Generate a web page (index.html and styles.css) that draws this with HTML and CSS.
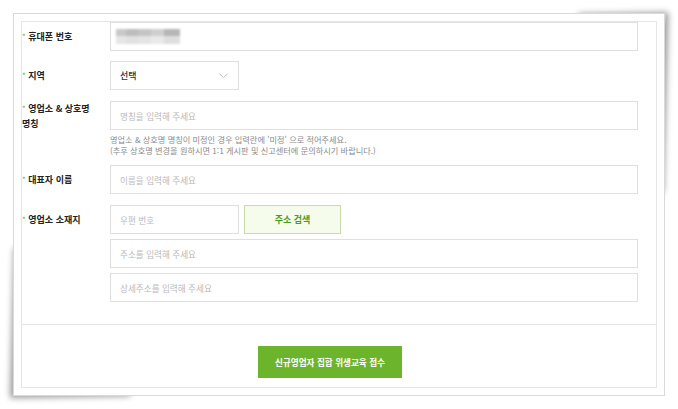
FILE: index.html
```html
<!DOCTYPE html>
<html lang="ko">
<head>
<meta charset="utf-8">
<link rel="stylesheet" href="styles.css">
</head>
<body>
<div class="stage">
  <div class="paper">
    <div class="card">
      <div class="form">
        <div class="row r1">
          <div class="label"><span class="req">*</span> 휴대폰 번호</div>
          <div class="field input wide"><span class="blur"></span></div>
        </div>
        <div class="row r2">
          <div class="label"><span class="req">*</span> 지역</div>
          <div class="field input select">
            <span class="sel-text">선택</span>
            <svg class="chev" width="9" height="6" viewBox="0 0 9 6"><path d="M0.5 0.8 L4.5 4.6 L8.5 0.8" fill="none" stroke="#b5b5b5" stroke-width="0.9"/></svg>
          </div>
        </div>
        <div class="row r3">
          <div class="label two"><span class="req">*</span> 영업소 &amp; 상호명<br>명칭</div>
          <div class="col">
            <div class="field input full"><span class="ph">명칭을 입력해 주세요</span></div>
            <p class="help">영업소 &amp; 상호명 명칭이 미정인 경우 입력란에 '미정' 으로 적어주세요.<br>(추후 상호명 변경을 원하시면 1:1 게시판 및 신고센터에 문의하시기 바랍니다.)</p>
          </div>
        </div>
        <div class="row r4">
          <div class="label"><span class="req">*</span> 대표자 이름</div>
          <div class="field input wide"><span class="ph">이름을 입력해 주세요</span></div>
        </div>
        <div class="row r5">
          <div class="label"><span class="req">*</span> 영업소 소재지</div>
          <div class="col">
            <div class="zip-line">
              <div class="field input zip"><span class="ph">우편 번호</span></div>
              <div class="search-btn">주소 검색</div>
            </div>
            <div class="field input full addr"><span class="ph">주소를 입력해 주세요</span></div>
            <div class="field input full addr"><span class="ph">상세주소를 입력해 주세요</span></div>
          </div>
        </div>
      </div>
      <div class="submit-area">
        <div class="submit-btn">신규영업자 집합 위생교육 접수</div>
      </div>
    </div>
  </div>
</div>
</body>
</html>
```

FILE: styles.css
```css
* { box-sizing: border-box; }
html, body { margin: 0; padding: 0; background: #fff; }
body {
  font-family: "Noto Sans CJK KR", "Noto Sans", sans-serif;
  color: #222;
  width: 678px;
  height: 409px;
  overflow: hidden;
}
.stage {
  position: relative;
  z-index: 0;
  padding: 13px;
}
.paper {
  position: relative;
  width: 652px;
  height: 383px;
  border: 1px solid #d9d9d9;
  background: #fff;
  padding: 7px;
}
.paper::before,
.paper::after {
  content: "";
  position: absolute;
  z-index: -1;
  background: #fff;
}
.paper::before {
  top: 1px;
  right: 1px;
  width: 90px;
  height: 180px;
  box-shadow: 3px -2px 6px rgba(0,0,0,0.4);
  transform: skew(-1.5deg, -1deg);
}
.paper::after {
  bottom: 1px;
  left: 1px;
  width: 120px;
  height: 150px;
  box-shadow: -3px 3px 6px rgba(0,0,0,0.4);
  transform: skew(-1.5deg, -1deg);
}
.card {
  height: 100%;
  border: 1px solid #e6e6e6;
  display: flex;
  flex-direction: column;
}
.form {
  height: 302px;
  padding-right: 18px;
  display: flex;
  flex-direction: column;
}
.row {
  display: flex;
  align-items: flex-start;
}
.r2 { margin-top: 10px; }
.r3 { margin-top: 11px; }
.r4 { margin-top: 9px; }
.r5 { margin-top: 11px; }
.label {
  width: 88px;
  flex: none;
  font-size: 9px;
  font-weight: 700;
  line-height: 29px;
  color: #222;
  white-space: nowrap;
}
.label.two {
  line-height: 15px;
}
.req {
  color: #6db42b;
  font-weight: 400;
  font-size: 8px;
}
.col {
  flex: 1;
  display: flex;
  flex-direction: column;
}
.input {
  height: 29px;
  border: 1px solid #dfdfdf;
  background: #fff;
  display: flex;
  align-items: center;
  padding-left: 9px;
}
.wide { flex: 1; }
.full { width: 100%; flex: none; }
.ph {
  font-size: 8.6px;
  color: #b9b9b9;
}
.blur {
  display: block;
  width: 64px;
  height: 15px;
  margin-left: -4px;
  background:
    linear-gradient(to bottom, rgba(255,255,255,0) 50%, rgba(255,255,255,0.55) 50%),
    linear-gradient(to right, #c8c8c8 0 15%, #bdbdbd 15% 35%, #c4c4c4 35% 55%, #cfcfcf 55% 75%, #b6b6b6 75% 100%);
  filter: blur(1.3px);
}
.select {
  width: 129px;
  justify-content: space-between;
  padding-right: 10px;
}
.sel-text {
  font-size: 9px;
  font-weight: 500;
  color: #333;
}
.chev { display: block; }
.help {
  margin: 4px 0 0 0;
  font-size: 8.2px;
  line-height: 11px;
  color: #8a8a8a;
  white-space: nowrap;
}
.zip-line {
  display: flex;
  gap: 5px;
}
.zip { width: 129px; flex: none; }
.search-btn {
  width: 97px;
  height: 29px;
  border: 1px solid #c6dca9;
  background: #f5fcec;
  color: #4f9a1c;
  font-size: 9px;
  font-weight: 700;
  display: flex;
  align-items: center;
  justify-content: center;
}
.addr { margin-top: 5px; }
.submit-area {
  border-top: 1px solid #e6e6e6;
  flex: 1;
  display: flex;
  justify-content: center;
  align-items: flex-start;
  padding-top: 21px;
}
.submit-btn {
  width: 144px;
  height: 32px;
  background: #6cb42c;
  color: #fff;
  font-size: 8.6px;
  font-weight: 700;
  display: flex;
  align-items: center;
  justify-content: center;
  margin-right: 18px;
}
```
